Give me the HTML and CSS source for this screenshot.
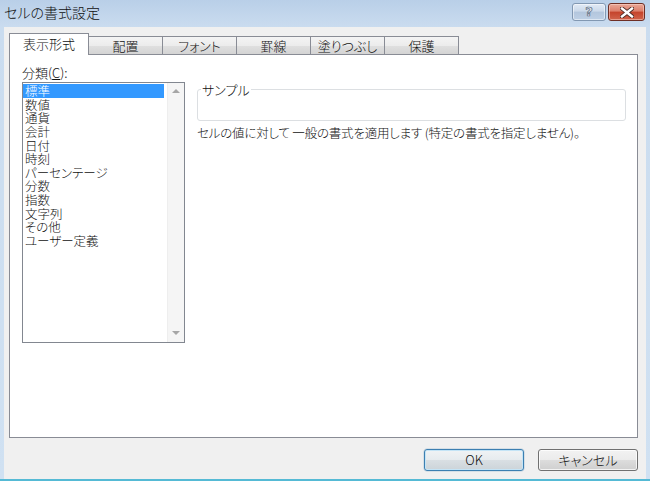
FILE: index.html
```html
<!DOCTYPE html>
<html lang="ja">
<head>
<meta charset="utf-8">
<title>セルの書式設定</title>
<link rel="stylesheet" href="styles.css">
</head>
<body>
<div class="window">
  <div class="titlebar">
    <div class="title">セルの書式設定</div>
    <div class="caption-buttons">
      <div class="cap-btn help"><span class="help-glyph">?</span></div>
      <div class="cap-btn close">
        <svg width="14" height="11" viewBox="0 0 14 11">
          <path d="M2 1.5 L12 9.5 M12 1.5 L2 9.5" stroke="#4a2a24" stroke-width="4.2" stroke-linecap="square" fill="none"/>
          <path d="M2 1.5 L12 9.5 M12 1.5 L2 9.5" stroke="#ffffff" stroke-width="2.4" stroke-linecap="square" fill="none"/>
        </svg>
      </div>
    </div>
  </div>
  <div class="client">
    <div class="tabs">
      <div class="tab active">表示形式</div>
      <div class="tab">配置</div>
      <div class="tab">フォント</div>
      <div class="tab">罫線</div>
      <div class="tab">塗りつぶし</div>
      <div class="tab">保護</div>
    </div>
    <div class="panel">
      <div class="left-col">
        <div class="label">分類(<u>C</u>):</div>
        <div class="listbox">
          <ul class="items">
            <li class="selected">標準</li>
            <li>数値</li>
            <li>通貨</li>
            <li>会計</li>
            <li>日付</li>
            <li>時刻</li>
            <li>パーセンテージ</li>
            <li>分数</li>
            <li>指数</li>
            <li>文字列</li>
            <li>その他</li>
            <li>ユーザー定義</li>
          </ul>
          <div class="vscroll">
            <div class="sb-btn"><span class="arrow up"></span></div>
            <div class="sb-btn"><span class="arrow down"></span></div>
          </div>
        </div>
      </div>
      <div class="right-col">
        <fieldset class="sample">
          <legend>サンプル</legend>
          <div class="sample-body"></div>
        </fieldset>
        <p class="desc">セルの値に対して 一般の書式を適用します (特定の書式を指定しません)。</p>
      </div>
    </div>
    <div class="buttons">
      <button class="btn default">OK</button>
      <button class="btn">キャンセル</button>
    </div>
  </div>
</div>
</body>
</html>
```
FILE: styles.css
```css
* { box-sizing: border-box; }
html, body {
  margin: 0;
  padding: 0;
  width: 650px;
  height: 481px;
  overflow: hidden;
  background: #cfe0f1;
}
body {
  font-family: "Noto Sans CJK JP", "Noto Sans", sans-serif;
  font-feature-settings: "palt";
  font-weight: 300;
  font-size: 13px;
  color: #111;
}
.window {
  width: 650px;
  height: 481px;
  display: flex;
  flex-direction: column;
  background: linear-gradient(#b9cfe8 0px, #cadcef 27px, #d0e1f2 100%);
  border-bottom: 2px solid #55bad5;
}
.titlebar {
  height: 27px;
  flex: none;
  display: flex;
  justify-content: space-between;
  align-items: flex-start;
}
.title {
  padding-left: 4px;
  padding-top: 3px;
  font-size: 14px;
  line-height: 18px;
  color: #101010;
}
.caption-buttons {
  display: flex;
  gap: 2px;
  padding-top: 3px;
  padding-right: 5px;
}
.cap-btn {
  height: 18px;
  border-radius: 3px;
  display: flex;
  align-items: center;
  justify-content: center;
}
.help {
  width: 34px;
  border: 1px solid #8298b2;
  background: linear-gradient(#e1eaf5 0%, #cbd9ea 45%, #b3c6dd 50%, #bed0e5 100%);
  box-shadow: inset 0 0 0 1px rgba(255,255,255,0.5);
}
.help-glyph {
  font-family: "DejaVu Sans", sans-serif;
  font-weight: bold;
  font-size: 13px;
  line-height: 14px;
  color: #dfe7f1;
  -webkit-text-stroke: 0.7px #5d6c7e;
}
.close {
  width: 37px;
  border: 1px solid #6e2f25;
  background: linear-gradient(#e9a898 0%, #dc7e6a 45%, #c5432b 50%, #d0644c 100%);
  box-shadow: inset 0 0 0 1px rgba(255,220,210,0.5);
}
.client {
  flex: 1;
  margin: 0 4px;
  background: #f0f0f0;
  padding: 6px 8px 8px 5px;
  display: flex;
  flex-direction: column;
}
.tabs {
  display: flex;
  align-items: flex-end;
  height: 22px;
  margin-bottom: -1px;
  position: relative;
  z-index: 1;
}
.tab {
  width: 75px;
  height: 18px;
  margin-bottom: 1px;
  margin-left: -1px;
  border: 1px solid #898c95;
  border-bottom: none;
  background: linear-gradient(#f4f4f4 0%, #ececec 50%, #e0e0e0 51%, #d4d4d4 100%);
  display: flex;
  align-items: center;
  justify-content: center;
  font-size: 13px;
  line-height: 16px;
  padding-top: 1px;
}
.tab.active {
  width: 80px;
  height: 22px;
  margin-bottom: 0;
  margin-left: 0;
  background: #fff;
  padding-top: 0;
  padding-bottom: 2px;
  position: relative;
  z-index: 2;
}
.panel {
  height: 384px;
  flex: none;
  border: 1px solid #898c95;
  background: #fff;
  display: flex;
  gap: 12px;
  padding: 10px 11px 0 12px;
}
.left-col {
  width: 163px;
  flex: none;
}
.label {
  line-height: 16px;
  height: 16px;
  margin-bottom: 1px;
}
.label u { text-underline-offset: 1px; }
.listbox {
  height: 261px;
  border: 1px solid #828790;
  display: flex;
  background: #fff;
}
.items {
  list-style: none;
  margin: 0;
  padding: 1px 3px 0 0;
  flex: 1;
  font-size: 12.5px;
}
.items li {
  height: 13.64px;
  line-height: 13.64px;
  padding-left: 2px;
  white-space: nowrap;
}
.items li.selected {
  background: #3399ff;
  color: #fff;
}
.vscroll {
  width: 17px;
  flex: none;
  background: #f5f5f5;
  border-left: 1px solid #eeeeee;
  display: flex;
  flex-direction: column;
  justify-content: space-between;
}
.sb-btn {
  height: 17px;
  display: flex;
  align-items: center;
  justify-content: center;
}
.arrow {
  width: 0;
  height: 0;
  border-left: 4px solid transparent;
  border-right: 4px solid transparent;
}
.arrow.up { border-bottom: 4px solid #a6a6a6; margin-bottom: 2px; }
.arrow.down { border-top: 4px solid #a6a6a6; margin-top: -2px; }
.right-col {
  flex: 1;
  padding-top: 17px;
}
.sample {
  margin: 0;
  padding: 0 3px;
  border: 1px solid #dcdfe2;
  border-radius: 3px;
}
.sample legend {
  padding: 0 1px;
  line-height: 15px;
  font-size: 13px;
  color: #101010;
}
.sample-body {
  height: 23px;
}
.desc {
  margin: 4px 0 0 0;
  line-height: 16px;
  font-size: 12.5px;
  letter-spacing: -0.2px;
  white-space: nowrap;
}
.buttons {
  display: flex;
  justify-content: flex-end;
  gap: 14px;
  margin-top: 11px;
}
.btn {
  width: 100px;
  height: 22px;
  font-family: "Noto Sans CJK JP", "Noto Sans", sans-serif;
  font-feature-settings: "palt";
  font-weight: 300;
  font-size: 13px;
  line-height: 18px;
  color: #111;
  border: 1px solid #707070;
  border-radius: 3px;
  background: linear-gradient(#f2f2f2 0%, #ebebeb 50%, #dddddd 51%, #cfcfcf 100%);
  box-shadow: inset 0 0 0 1px rgba(255,255,255,0.75);
  padding: 0;
}
.btn.default {
  border-color: #3c7fb1;
  box-shadow: inset 0 0 0 1px #c4e4f6, 0 0 0 0.5px rgba(60,127,177,0.3);
  background: linear-gradient(#f0f3f5 0%, #e6ebee 50%, #d9dfe3 51%, #ccd4d9 100%);
}
```
